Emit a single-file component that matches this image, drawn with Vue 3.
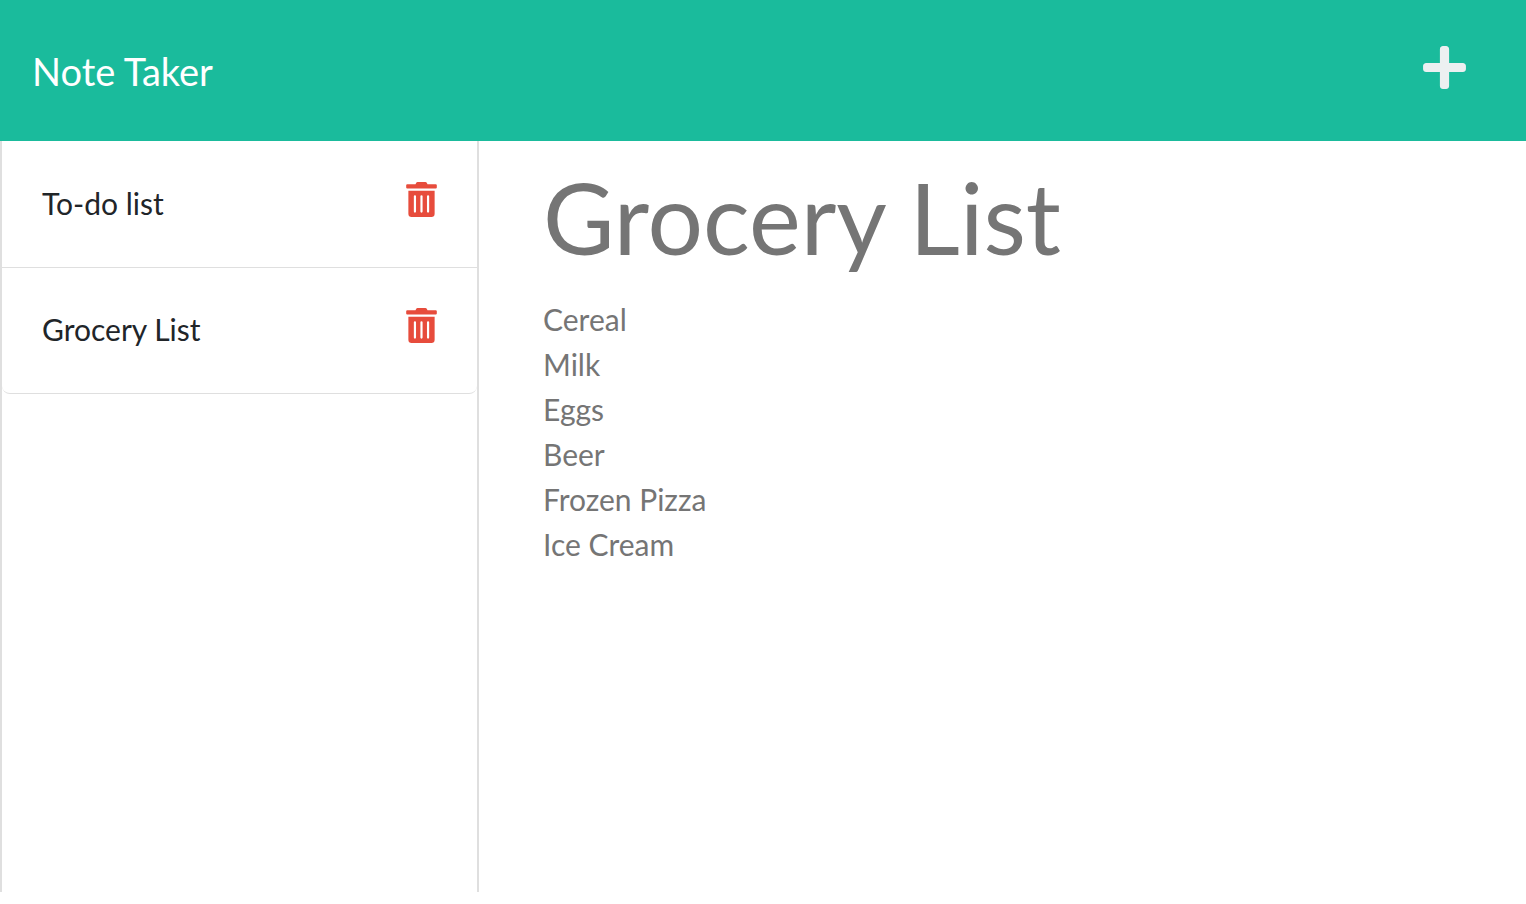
<script setup>
import { ref } from 'vue'

const notes = ref([
  { id: 1, title: 'To-do list' },
  { id: 2, title: 'Grocery List' },
])
const title = ref('Grocery List')
const text = ref('Cereal\nMilk\nEggs\nBeer\nFrozen Pizza\nIce Cream')

function removeNote(id) {
  notes.value = notes.value.filter((note) => note.id !== id)
}

function newNote() {
  title.value = ''
  text.value = ''
}
</script>

<template>
  <div class="app">
    <header class="navbar">
      <a class="brand" href="#">Note Taker</a>
      <button class="icon-button add" type="button" aria-label="New note" @click="newNote">
        <svg viewBox="0 0 448 512" aria-hidden="true">
          <path d="M416 208H272V64c0-17.67-14.33-32-32-32h-32c-17.67 0-32 14.33-32 32v144H32c-17.67 0-32 14.33-32 32v32c0 17.67 14.33 32 32 32h144v144c0 17.67 14.33 32 32 32h32c17.67 0 32-14.33 32-32V304h144c17.67 0 32-14.33 32-32v-32c0-17.67-14.33-32-32-32z" />
        </svg>
      </button>
    </header>
    <div class="content">
      <aside class="sidebar">
        <ul class="notes">
          <li v-for="note in notes" :key="note.id" class="note">
            <span>{{ note.title }}</span>
            <button class="icon-button delete" type="button" :aria-label="'Delete ' + note.title" @click="removeNote(note.id)">
              <svg viewBox="0 0 448 512" aria-hidden="true">
                <path d="M32 464a48 48 0 0 0 48 48h288a48 48 0 0 0 48-48V128H32zm272-256a16 16 0 0 1 32 0v224a16 16 0 0 1-32 0zm-96 0a16 16 0 0 1 32 0v224a16 16 0 0 1-32 0zm-96 0a16 16 0 0 1 32 0v224a16 16 0 0 1-32 0zM432 32H312l-9.400-18.700A24 24 0 0 0 281.100 0H166.800a23.720 23.720 0 0 0-21.400 13.300L136 32H16A16 16 0 0 0 0 48v32a16 16 0 0 0 16 16h416a16 16 0 0 0 16-16V48a16 16 0 0 0-16-16z" />
              </svg>
            </button>
          </li>
        </ul>
      </aside>
      <main class="editor">
        <input v-model="title" class="title" type="text" aria-label="Note title" />
        <textarea v-model="text" class="body" aria-label="Note text"></textarea>
      </main>
    </div>
  </div>
</template>

<style>
body {
  margin: 0;
  background: #fff;
}
</style>

<style scoped>
.app,
.app * {
  box-sizing: border-box;
}

.app {
  display: flex;
  flex-direction: column;
  height: 100vh;
  padding-bottom: 12px;
  font-family: Lato, sans-serif;
  font-size: 30px;
  line-height: 45px;
  color: #212529;
}

.navbar {
  display: flex;
  align-items: center;
  justify-content: space-between;
  padding: 41px 60px 39px 32px;
  background: #1abb9c;
}

.brand {
  font-size: 38px;
  line-height: 61px;
  color: #fff;
  text-decoration: none;
}

.icon-button {
  display: flex;
  padding: 0;
  border: 0;
  background: none;
  cursor: pointer;
}

.icon-button svg {
  display: block;
  fill: currentColor;
}

.add {
  margin-bottom: 8px;
  color: #ecf0f1;
}

.add svg {
  width: 43px;
  height: 49px;
}

.content {
  display: flex;
  flex: 1;
  min-height: 0;
}

.sidebar {
  flex: 0 0 479px;
  border: solid #dfdfdf;
  border-width: 0 2px;
}

.notes {
  margin: 0;
  padding: 1px 0 0;
  list-style: none;
  border-bottom: 1px solid #dfdfdf;
  border-radius: 0 0 8px 8px;
}

.note {
  display: flex;
  align-items: center;
  justify-content: space-between;
  padding: 39px 40px 41px;
}

.note + .note {
  border-top: 1px solid #dfdfdf;
}

.delete {
  margin-bottom: 8px;
  color: #e74c3c;
}

.delete svg {
  width: 31px;
  height: 35px;
}

.editor {
  display: flex;
  flex: 1;
  flex-direction: column;
  min-width: 0;
  padding: 18px 64px 0;
}

.title,
.body {
  width: 100%;
  padding: 0;
  border: 0;
  outline: 0;
  background: none;
  font-family: inherit;
  color: #757575;
}

.title {
  height: 116px;
  font-size: 98px;
  line-height: 116px;
}

.body {
  flex: 1;
  margin-top: 22px;
  font-size: 30px;
  line-height: 45px;
  resize: none;
}
</style>
